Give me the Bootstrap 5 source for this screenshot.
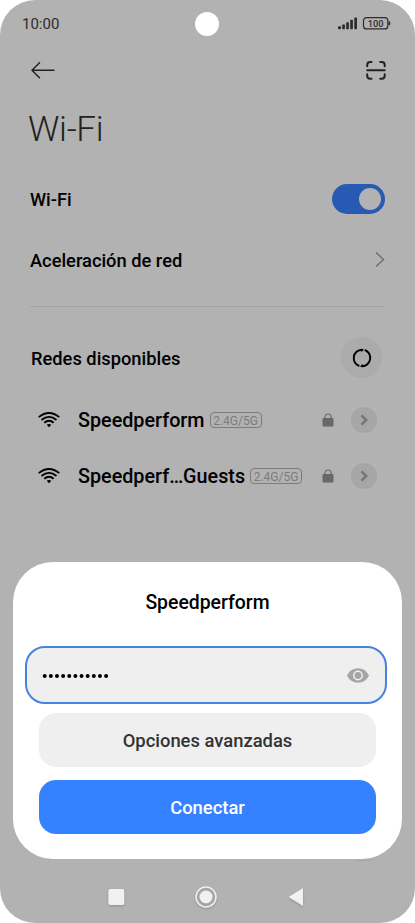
<!DOCTYPE html>
<html lang="es">
<head>
<meta charset="utf-8">
<meta name="viewport" content="width=device-width, initial-scale=1">
<title>Wi-Fi</title>
<link href="https://cdn.jsdelivr.net/npm/bootstrap@5.3.0/dist/css/bootstrap.min.css" rel="stylesheet">
<style>
body{font-family:Roboto,"Liberation Sans",sans-serif;background:#fff;color:#000;line-height:1}
svg{display:block;flex:none}
.phone{width:415px;height:923px;background:#b2b2b2;border-radius:35px}
.status{height:46px;padding:1px 24px 0 22px;color:#2c2c2c}
.clock{font-size:15px;font-weight:450;padding-top:1px}
.camera{width:24px;height:24px;left:195px;top:12px}
.topbar{height:48px;padding:0 29px 0 31px}
.title{height:70px;padding-left:28px;font-size:35px;font-weight:300;letter-spacing:-.3px;color:#222}
.set-row{font-size:18.300px;font-weight:480;padding:0 30px}
.toggle{width:53px;height:30px;background:#275ab2;padding:4px}
.knob{width:22px;height:22px;background:#b2b2b2}
.rule{height:1px;margin:0 31px 0 30px;background:#a3a3a3}
.round-lg{width:41px;height:41px;background:#ababab}
.round-sm{width:26px;height:26px;background:#a6a6a6}
.net{height:56px;padding:0 38px}
.net-name{font-size:19.750px;font-weight:480;margin-left:18px;padding-top:2px}
.band{border:1px solid #7c7c7c;border-radius:4px;height:16px;width:52px;font-size:12px;color:#7c7c7c;margin-left:5px;padding-top:1px}
.sheet{width:389px;height:297px;border-radius:40px;margin:0 13px;padding:0 12px;background:#fff}
.sheet-title{height:84px;font-size:19.400px;font-weight:480;padding-bottom:2px}
.pass{width:362px;height:58px;border:2px solid #4583df;border-radius:20px;background:#efefef;padding:0 16px 0 15px}
.btn-soft,.btn-go{width:337px;height:54px;border-radius:17px;border:0;font-size:18.400px;font-weight:480;margin-left:14px;padding:8px 12px 6px}
.btn-soft,.btn-soft:hover{background:#efefef;color:#333}
.btn-go,.btn-go:hover{background:#3482ff;color:#fff}
</style>
</head>
<body>
<main class="phone position-relative overflow-hidden d-flex flex-column">
  <div class="camera position-absolute rounded-circle bg-white"></div>
  <div class="status d-flex align-items-center justify-content-between">
    <span class="clock">10:00</span>
    <svg width="53" height="14" viewBox="0 0 53 14">
      <g fill="#2c2c2c"><rect y="9.300" width="3" height="3" rx="1"/><rect x="4.200" y="7.500" width="2.700" height="4.800" rx=".7"/><rect x="8.200" y="5.300" width="2.700" height="7" rx=".7"/><rect x="12.200" y="2.800" width="2.700" height="9.500" rx=".7"/><rect x="16.300" y=".5" width="2.700" height="11.800" rx=".7"/><rect x="50.500" y="4.300" width="1.700" height="4" rx=".8"/></g>
      <rect x="25.500" y=".6" width="24.300" height="11.300" rx="3" fill="none" stroke="#2c2c2c" stroke-width="1.200"/>
      <text x="37.600" y="9.500" text-anchor="middle" font-size="9.200" font-weight="500" fill="#2c2c2c">100</text>
    </svg>
  </div>
  <header class="topbar d-flex align-items-center justify-content-between">
    <svg width="25" height="18" viewBox="0 0 25 18" fill="none" stroke="#222" stroke-width="1.500" stroke-linecap="round" stroke-linejoin="round"><path d="M23 9.300H1M8.500 1.800L1 9.300l7.500 7.500"/></svg>
    <svg width="20" height="20" viewBox="0 0 20 20" fill="none" stroke="#222" stroke-width="2" stroke-linecap="round"><path d="M1.200 10.300h17.500M1.200 6.300V5q0-3 3-3h1.300M14.200 2h1.500q3 0 3 3v1.300M1.200 14.300v1.500q0 3 3 3h1.300M14.200 18.800h1.500q3 0 3-3v-1.500"/></svg>
  </header>
  <div class="title d-flex align-items-center">Wi-Fi</div>
  <div class="set-row d-flex align-items-center justify-content-between" style="height:70px">
    <span style="padding-top:2px">Wi-Fi</span>
    <div class="toggle rounded-pill d-flex justify-content-end"><div class="knob rounded-circle"></div></div>
  </div>
  <div class="set-row d-flex align-items-center justify-content-between" style="height:52px">
    <span style="padding-top:2px">Aceleración de red</span>
    <svg width="10" height="16" viewBox="0 0 10 16" fill="none" stroke="#707070" stroke-width="1.500"><path d="M1 .5l7.500 7L1 14.500"/></svg>
  </div>
  <div class="flex-shrink-0" style="height:20px"></div>
  <div class="rule flex-shrink-0"></div>
  <div class="set-row d-flex align-items-center justify-content-between" style="height:85px;padding:16px 33px 0 31px">
    <span style="padding-top:3px">Redes disponibles</span>
    <div class="round-lg rounded-circle d-flex align-items-center justify-content-center">
      <svg width="20" height="20" viewBox="0 0 20 20"><g fill="none" stroke="#000" stroke-width="1.900"><path d="M7.300 18A8.400 8.400 0 0 1 9.800 1.700M12.700 2A8.400 8.400 0 0 1 10.200 18.300"/></g><path d="M9 .8L12 1.200 9.500 4.200zM11 19.200L8 18.800 10.500 15.800z"/></svg>
    </div>
  </div>
  <div class="net d-flex align-items-center">
    <svg width="22" height="16" viewBox="0 0 22 16" fill="none" stroke="#000" stroke-width="1.800"><path d="M.7 5.100Q11-3.100 21.300 5.100M3.500 8Q11 1.800 18.500 8M6.300 10.700Q11 6.800 15.700 10.700"/><path d="M8.700 12.800Q11 11 13.300 12.800L11 15.300z" fill="#000" stroke="none"/></svg>
    <span class="net-name">Speedperform</span><span class="band d-flex align-items-center justify-content-center">2.4G/5G</span>
    <svg class="ms-auto" width="12" height="14" viewBox="0 0 12 14"><rect x=".5" y="5" width="11" height="8.500" rx="1" fill="#686868"/><path d="M3 5.500V4a3 3 0 0 1 6 0v1.500" fill="none" stroke="#686868" stroke-width="1.200"/></svg>
    <div class="round-sm rounded-circle d-flex align-items-center justify-content-center" style="margin-left:17px"><svg width="8" height="12" viewBox="0 0 8 12" fill="none" stroke="#757575" stroke-width="2.500"><path d="M1.500 1.300L6.300 6l-4.800 4.700"/></svg></div>
  </div>
  <div class="net d-flex align-items-center">
    <svg width="22" height="16" viewBox="0 0 22 16" fill="none" stroke="#000" stroke-width="1.800"><path d="M.7 5.100Q11-3.100 21.300 5.100M3.500 8Q11 1.800 18.500 8M6.300 10.700Q11 6.800 15.700 10.700"/><path d="M8.700 12.800Q11 11 13.300 12.800L11 15.300z" fill="#000" stroke="none"/></svg>
    <span class="net-name">Speedperf…Guests</span><span class="band d-flex align-items-center justify-content-center">2.4G/5G</span>
    <svg class="ms-auto" width="12" height="14" viewBox="0 0 12 14"><rect x=".5" y="5" width="11" height="8.500" rx="1" fill="#686868"/><path d="M3 5.500V4a3 3 0 0 1 6 0v1.500" fill="none" stroke="#686868" stroke-width="1.200"/></svg>
    <div class="round-sm rounded-circle d-flex align-items-center justify-content-center" style="margin-left:17px"><svg width="8" height="12" viewBox="0 0 8 12" fill="none" stroke="#757575" stroke-width="2.500"><path d="M1.500 1.300L6.300 6l-4.800 4.700"/></svg></div>
  </div>
  <section class="sheet mt-auto flex-shrink-0">
    <div class="sheet-title d-flex align-items-center justify-content-center">Speedperform</div>
    <div class="pass d-flex align-items-center justify-content-between">
      <svg width="68" height="5" viewBox="0 0 68 5"><path d="M2.700 3H66" stroke="#000" stroke-width="4" stroke-linecap="round" stroke-dasharray="0 6.140"/></svg>
      <svg width="22" height="15" viewBox="0 0 22 15"><path d="M0 7.500Q3.500.3 11 .3T22 7.500Q18.500 14.700 11 14.700T0 7.500z" fill="#a5a5a5"/><circle cx="11" cy="7.500" r="4.200" fill="#a5a5a5" stroke="#efefef" stroke-width="1.500"/></svg>
    </div>
    <button class="btn btn-soft d-block" style="margin-top:9px">Opciones avanzadas</button>
    <button class="btn btn-go d-block" style="margin-top:13px">Conectar</button>
  </section>
  <nav class="flex-shrink-0" style="height:64px">
    <svg width="415" height="64" viewBox="0 0 415 64"><path d="M356 1.500h16" stroke="#a5a5a5"/><g style="filter:drop-shadow(0 1px 1px #0003)" fill="#f1f1f1"><rect x="108.300" y="30" width="16" height="16" rx="2"/><circle cx="206" cy="38" r="6.500"/><circle cx="206" cy="38" r="10" fill="none" stroke="#f1f1f1" stroke-width="1.500"/><path d="M288.500 38l14.500-9v18z"/></g></svg>
  </nav>
</main>
<script src="https://cdn.jsdelivr.net/npm/bootstrap@5.3.0/dist/js/bootstrap.bundle.min.js"></script>
</body>
</html>
